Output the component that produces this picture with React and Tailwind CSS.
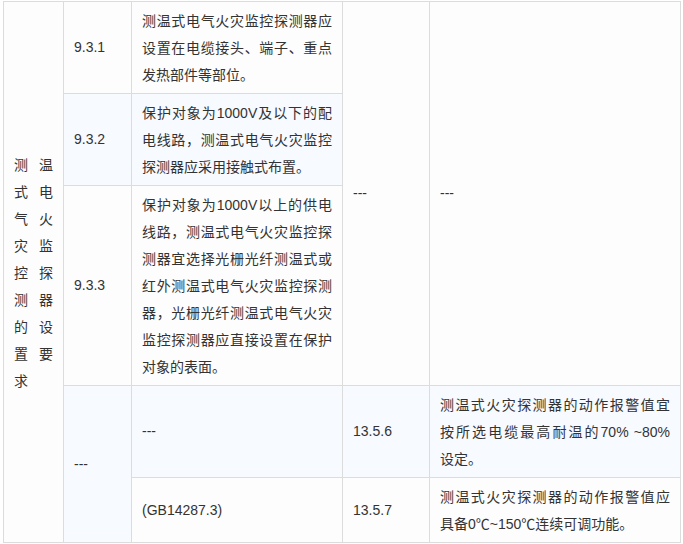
const cell = "border border-[#dcdcdc] px-[10px] py-[5px] align-middle";
const LATIN = { fontFamily: '"Liberation Sans", Arial, sans-serif' };

// latin runs get Arial metrics, the rest stays in the CJK face
const Mixed = ({ text }) =>
  text.split(/([0-9A-Za-z.%~()]+)/).map((part, i) =>
    /^[0-9A-Za-z.%~()]+$/.test(part) ? (
      <span key={i} style={LATIN}>
        {part}
      </span>
    ) : (
      part
    )
  );

const Lines = ({ lines }) => (
  <div>
    {lines.map((l, i) => (
      <div
        key={i}
        className={
          i < lines.length - 1
            ? "h-[27px] text-justify [text-align-last:justify] whitespace-nowrap"
            : "h-[27px] whitespace-nowrap"
        }
      >
        <Mixed text={l} />
      </div>
    ))}
  </div>
);

const Num = ({ children }) => (
  <div className="h-[27px] whitespace-nowrap" style={LATIN}>
    {children}
  </div>
);

const SIDE = ["测温", "式电", "气火", "灾监", "控探", "测器", "的设", "置要", "求"];

export default function App() {
  return (
    <div
      className="bg-white w-[683px] h-[544px] pl-[3px] pt-[1px] overflow-hidden text-[14px] leading-[27px] text-[#333]"
      style={{ fontFamily: '"Noto Sans CJK SC", sans-serif' }}
    >
      <table className="border-collapse table-fixed w-[677px]">
        <colgroup>
          <col className="w-[60px]" />
          <col className="w-[68px]" />
          <col className="w-[211px]" />
          <col className="w-[87px]" />
          <col className="w-[251px]" />
        </colgroup>
        <tbody>
          <tr className="bg-[#fdfdfd]">
            <td rowSpan={5} className={cell}>
              {SIDE.map((s, i) => (
                <div key={i} className="h-[27px] flex justify-between">
                  {s.split("").map((c, j) => (
                    <span key={j}>{c}</span>
                  ))}
                </div>
              ))}
            </td>
            <td className={cell}><Num>9.3.1</Num></td>
            <td className={cell}>
              <Lines lines={["测温式电气火灾监控探测器应", "设置在电缆接头、端子、重点", "发热部件等部位。"]} />
            </td>
            <td rowSpan={3} className={cell}><Num>---</Num></td>
            <td rowSpan={3} className={cell}><Num>---</Num></td>
          </tr>
          <tr className="bg-[#f7faff]">
            <td className={cell}><Num>9.3.2</Num></td>
            <td className={cell}>
              <Lines lines={["保护对象为1000V及以下的配", "电线路，测温式电气火灾监控", "探测器应采用接触式布置。"]} />
            </td>
          </tr>
          <tr className="bg-[#fdfdfd]">
            <td className={cell}><Num>9.3.3</Num></td>
            <td className={cell}>
              <Lines
                lines={[
                  "保护对象为1000V以上的供电",
                  "线路，测温式电气火灾监控探",
                  "测器宜选择光栅光纤测温式或",
                  "红外测温式电气火灾监控探测",
                  "器，光栅光纤测温式电气火灾",
                  "监控探测器应直接设置在保护",
                  "对象的表面。",
                ]}
              />
            </td>
          </tr>
          <tr className="bg-[#f7faff]">
            <td rowSpan={2} className={cell}><Num>---</Num></td>
            <td className={cell}><Num>---</Num></td>
            <td className={cell}><Num>13.5.6</Num></td>
            <td className={cell}>
              <Lines lines={["测温式火灾探测器的动作报警值宜", "按所选电缆最高耐温的70% ~80%", "设定。"]} />
            </td>
          </tr>
          <tr className="bg-[#fdfdfd]">
            <td className={cell}><Num>(GB14287.3)</Num></td>
            <td className={cell}><Num>13.5.7</Num></td>
            <td className={cell}>
              <Lines lines={["测温式火灾探测器的动作报警值应", "具备0℃~150℃连续可调功能。"]} />
            </td>
          </tr>
        </tbody>
      </table>
    </div>
  );
}
